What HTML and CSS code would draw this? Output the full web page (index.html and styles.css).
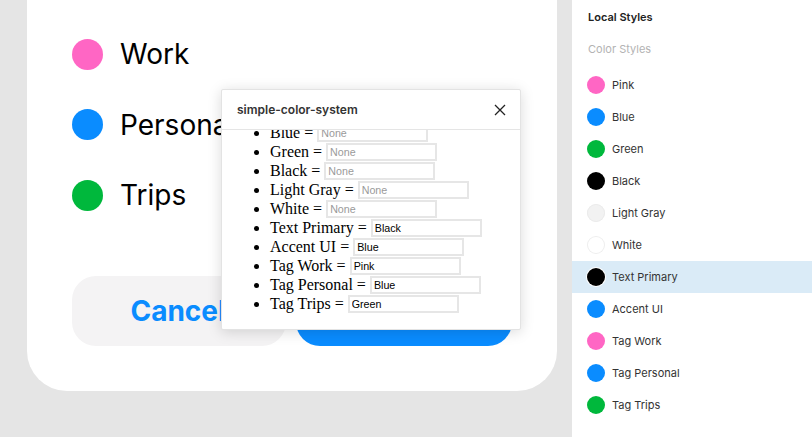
FILE: index.html
```html
<!DOCTYPE html>
<html>
<head>
<meta charset="utf-8">
<link rel="stylesheet" href="styles.css">
</head>
<body>
<div class="app">
  <div class="canvas">
    <div class="card">
      <div class="tags">
        <div class="tag"><span class="dot pink"></span><span>Work</span></div>
        <div class="tag"><span class="dot blue"></span><span>Personal</span></div>
        <div class="tag"><span class="dot green"></span><span>Trips</span></div>
      </div>
      <div class="actions">
        <button class="btn btn-cancel">Cancel</button>
        <button class="btn btn-save">Save</button>
      </div>
    </div>

    <div class="dialog">
      <div class="dialog-header">
        <span class="dialog-title">simple-color-system</span>
        <svg class="close" width="12" height="12" viewBox="0 0 12 12"><path d="M1 1L11 11M11 1L1 11" stroke="#222" stroke-width="1.3" fill="none"/></svg>
      </div>
      <div class="dialog-body">
        <ul class="vars">
          <li>Pink = <input class="field" placeholder="None"></li>
          <li>Blue = <input class="field" placeholder="None"></li>
          <li>Green = <input class="field" placeholder="None"></li>
          <li>Black = <input class="field" placeholder="None"></li>
          <li>Light Gray = <input class="field" placeholder="None"></li>
          <li>White = <input class="field" placeholder="None"></li>
          <li>Text Primary = <input class="field" value="Black"></li>
          <li>Accent UI = <input class="field" value="Blue"></li>
          <li>Tag Work = <input class="field" value="Pink"></li>
          <li>Tag Personal = <input class="field" value="Blue"></li>
          <li>Tag Trips = <input class="field" value="Green"></li>
        </ul>
      </div>
    </div>
  </div>

  <aside class="panel">
    <div class="panel-title">Local Styles</div>
    <div class="panel-section">Color Styles</div>
    <div class="styles">
      <div class="style"><span class="sdot pink"></span>Pink</div>
      <div class="style"><span class="sdot blue"></span>Blue</div>
      <div class="style"><span class="sdot green"></span>Green</div>
      <div class="style"><span class="sdot black"></span>Black</div>
      <div class="style"><span class="sdot lightgray"></span>Light Gray</div>
      <div class="style"><span class="sdot white"></span>White</div>
      <div class="style selected"><span class="sdot black"></span>Text Primary</div>
      <div class="style"><span class="sdot blue"></span>Accent UI</div>
      <div class="style"><span class="sdot pink"></span>Tag Work</div>
      <div class="style"><span class="sdot blue"></span>Tag Personal</div>
      <div class="style"><span class="sdot green"></span>Tag Trips</div>
    </div>
  </aside>
</div>
</body>
</html>
```

FILE: styles.css
```css
* { box-sizing: border-box; }

html, body {
  margin: 0;
  padding: 0;
}

body {
  background: #e5e5e5;
  font-family: Inter, "Noto Sans", sans-serif;
  overflow: hidden;
}

.app {
  display: flex;
  width: 812px;
  height: 437px;
}

.canvas {
  position: relative;
  width: 572px;
  flex: none;
}

.card {
  margin-left: 27px;
  width: 530px;
  height: 391px;
  background: #fff;
  border-radius: 0 0 40px 40px;
  padding: 38.5px 45px 45px;
  display: flex;
  flex-direction: column;
}

.tags {
  display: flex;
  flex-direction: column;
  gap: 39.5px;
}

.tag {
  display: flex;
  align-items: center;
  gap: 17px;
  height: 31px;
  font-size: 28px;
  color: #000;
}

.dot {
  width: 31px;
  height: 31px;
  border-radius: 50%;
  flex: none;
}

.pink { background: #ff66c4; }
.blue { background: #0a8cff; }
.green { background: #00b83c; }
.black { background: #000; }
.lightgray { background: #f2f2f2; box-shadow: inset 0 0 0 1px #ebebeb; }
.white { background: #fff; box-shadow: inset 0 0 0 1px #eeeeee; }

.actions {
  margin-top: auto;
  display: flex;
  gap: 10px;
}

.btn {
  flex: 1;
  height: 70px;
  border: none;
  border-radius: 24px;
  font-family: Inter, "Noto Sans", sans-serif;
  font-size: 28px;
  font-weight: 700;
}

.btn-cancel {
  background: #f4f3f4;
  color: #0a8cff;
  padding-left: 4px;
}

.btn-save {
  background: #0a8cff;
  color: #fff;
}

/* plugin dialog */
.dialog {
  position: absolute;
  left: 221px;
  top: 89px;
  width: 300px;
  height: 241px;
  background: #fff;
  border: 1px solid #e3e3e3;
  border-radius: 2px;
  box-shadow: 0 2px 14px rgba(0, 0, 0, 0.15);
  display: flex;
  flex-direction: column;
  overflow: hidden;
}

.dialog-header {
  height: 40px;
  flex: none;
  display: flex;
  align-items: center;
  justify-content: space-between;
  padding: 0 14px 0 15px;
  border-bottom: 1px solid #e5e5e5;
}

.dialog-title {
  font-size: 12px;
  font-weight: 600;
  color: #333;
}

.close {
  display: block;
  margin-top: 1px;
}

.dialog-body {
  flex: 1;
  min-height: 0;
  overflow: hidden;
  display: flex;
  flex-direction: column;
  justify-content: flex-end;
}

.vars {
  margin: 16px 0 16px 8px;
  padding-left: 40px;
  flex: none;
  font-family: "Liberation Serif", "Times New Roman", serif;
  font-size: 16px;
  color: #000;
}

.vars li {
  height: 19px;
  line-height: 19px;
}

.field {
  width: 111px;
  height: 18px;
  border: 2px solid #e6e6e6;
  padding: 0 2px;
  margin: 0;
  font-family: "Liberation Sans", Arial, sans-serif;
  font-size: 10.7px;
  color: #000;
  vertical-align: 1.5px;
  outline: none;
}

.field::placeholder {
  color: #9a9a9a;
}

/* right panel */
.panel {
  width: 240px;
  flex: none;
  background: #fff;
  font-size: 11px;
  color: #333;
}

.panel-title {
  height: 34px;
  line-height: 34px;
  padding: 0 16px;
  font-weight: 600;
  color: #222;
}

.panel-section {
  height: 30px;
  line-height: 30px;
  padding: 0 16px;
  color: #b3b3b3;
}

.styles {
  padding-top: 5px;
}

.style {
  height: 32px;
  display: flex;
  align-items: center;
  gap: 7px;
  padding-left: 15px;
}

.style.selected {
  background: #daebf7;
}

.sdot {
  width: 18px;
  height: 18px;
  border-radius: 50%;
  flex: none;
}

.style.selected .sdot {
  box-shadow: 0 0 0 1px #fff;
}
```
